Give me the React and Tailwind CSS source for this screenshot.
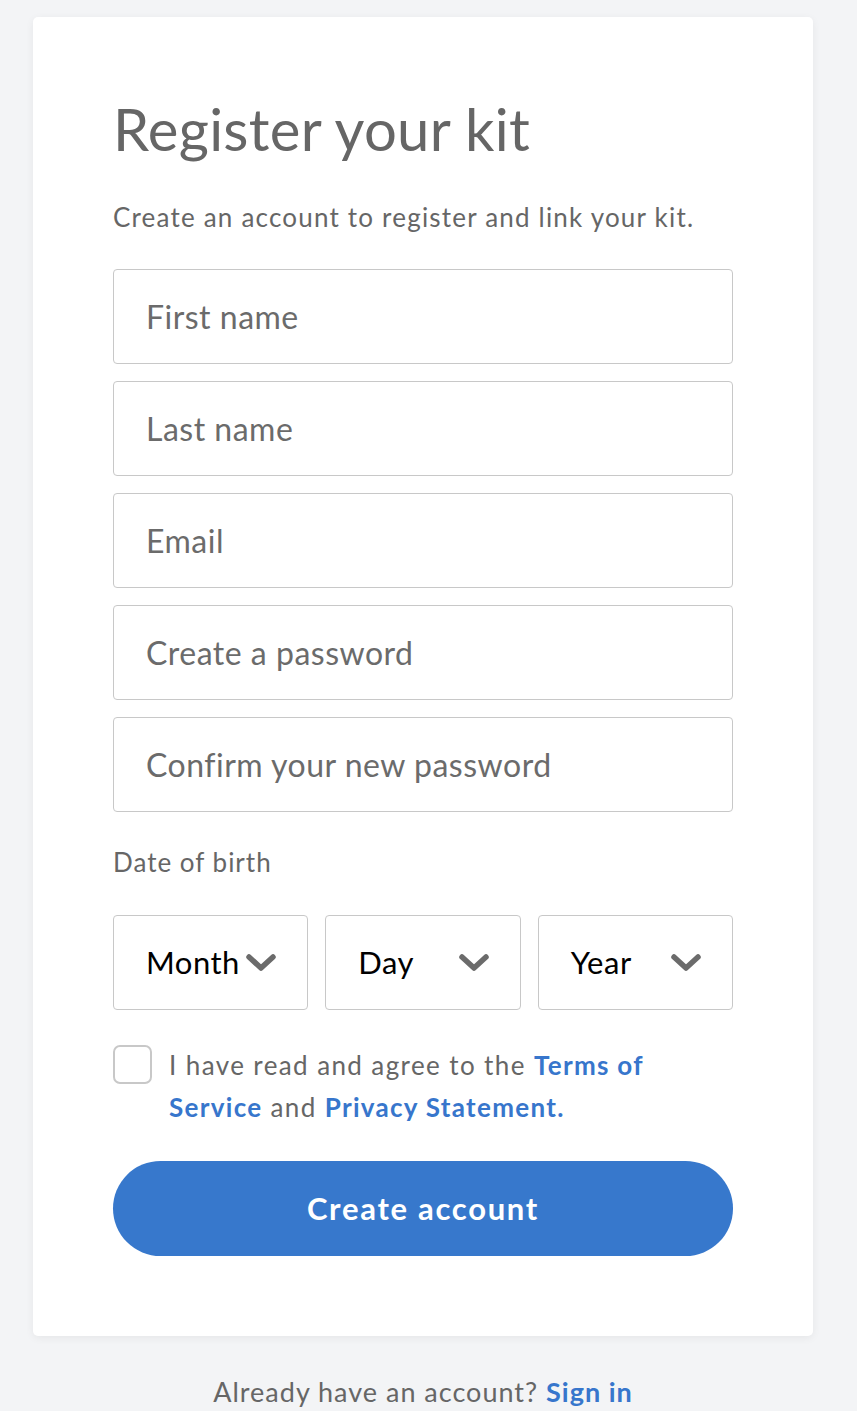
import React from "react";

function Chevron() {
  return (
    <svg width="32" height="20" viewBox="0 0 32 20" fill="none" className="shrink-0">
      <path d="M4 4 L16 15 L28 4" stroke="#6b6b6b" strokeWidth="5.5" strokeLinecap="round" strokeLinejoin="round" />
    </svg>
  );
}

function Field({ placeholder, type = "text" }) {
  return (
    <input
      type={type}
      placeholder={placeholder}
      className="block w-full h-[95px] rounded-[4px] border border-[#c8c8c8] bg-white px-[32px] text-[32px] tracking-[0.5px] text-[#333] placeholder:text-[#6b6b6b] outline-none"
    />
  );
}

function SelectBox({ label }) {
  return (
    <div className="flex h-[95px] items-center justify-between rounded-[4px] border border-[#c8c8c8] bg-white pl-[32px] pr-[30px]">
      <span className="text-[31px] tracking-[0.5px] text-black">{label}</span>
      <Chevron />
    </div>
  );
}

export default function App() {
  return (
    <div className="min-h-[1411px] bg-[#f3f4f6]" style={{ fontFamily: "Lato, 'Open Sans', sans-serif" }}>
      <div className="w-[846px] pt-[17px]">
        <div className="mx-auto w-[780px] rounded-[5px] bg-white px-[80px] pt-[80px] pb-[80px] shadow-[0_2px_8px_rgba(0,0,0,0.06)]">
          <h1 className="text-[58px] leading-[64px] text-[#666666] tracking-[0.3px]">Register your kit</h1>
          <p className="mt-[40px] text-[26px] leading-[32px] tracking-[1.2px] text-[#666666]">
            Create an account to register and link your kit.
          </p>
          <div className="mt-[36px] flex flex-col gap-[17px]">
            <Field placeholder="First name" />
            <Field placeholder="Last name" />
            <Field placeholder="Email" type="email" />
            <Field placeholder="Create a password" type="password" />
            <Field placeholder="Confirm your new password" type="password" />
          </div>
          <p className="mt-[34px] text-[26px] leading-[32px] tracking-[1px] text-[#666666]">Date of birth</p>
          <div className="mt-[37px] grid grid-cols-3 gap-[17px]">
            <SelectBox label="Month" />
            <SelectBox label="Day" />
            <SelectBox label="Year" />
          </div>
          <div className="mt-[35px] flex items-start gap-[17px]">
            <div className="h-[39px] w-[39px] shrink-0 rounded-[7px] border-2 border-[#c8c8c8] bg-white" />
            <p className="-mt-[1px] text-[26px] leading-[42px] tracking-[1.4px] text-[#666666]">
              I have read and agree to the{" "}
              <a className="font-bold tracking-[1.3px] text-[#3776cc]">Terms of Service</a> and{" "}
              <a className="font-bold tracking-[1.3px] text-[#3776cc]">Privacy Statement.</a>
            </p>
          </div>
          <button className="mt-[33px] flex h-[95px] w-full items-center justify-center rounded-full bg-[#3778cc] text-[31px] font-bold tracking-[1.7px] text-white">
            Create account
          </button>
        </div>
        <p className="mt-[40px] text-center text-[27px] leading-[32px] tracking-[1px] text-[#666666]">
          Already have an account? <a className="font-bold text-[#3776cc]">Sign in</a>
        </p>
      </div>
    </div>
  );
}
